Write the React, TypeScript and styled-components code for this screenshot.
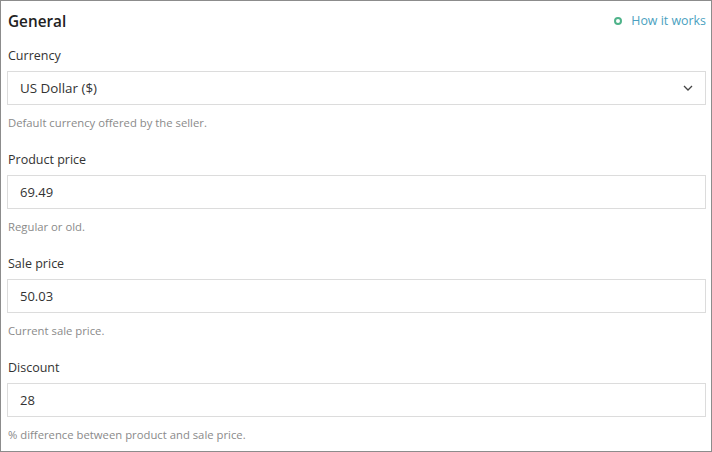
import React from "react";
import styled, { createGlobalStyle } from "styled-components";

const GlobalStyle = createGlobalStyle`
  body {
    margin: 0;
    background: #fff;
    font-family: "Open Sans", "Noto Sans", sans-serif;
  }
`;

type FieldProps = {
  label: string
  value: string
  hint: string
  select?: boolean
}

const fields: FieldProps[] = [
  {label: "Currency", value: "US Dollar ($)", hint: "Default currency offered by the seller.", select: true},
  {label: "Product price", value: "69.49", hint: "Regular or old."},
  {label: "Sale price", value: "50.03", hint: "Current sale price."},
  {label: "Discount", value: "28", hint: "% difference between product and sale price."},
];

const Field: React.FC<FieldProps> = props => (
  <FieldWrapper>
    <Label>{props.label}</Label>
    <InputBox $select={props.select}>
      <span>{props.value}</span>
      {props.select && (
        <svg width="10" height="6" viewBox="0 0 10 6">
          <polyline points="1,1 5,5 9,1" fill="none" stroke="#444" strokeWidth="1.3"/>
        </svg>
      )}
    </InputBox>
    <Hint>{props.hint}</Hint>
  </FieldWrapper>
);

const App: React.FC = () => (
  <>
    <GlobalStyle/>
    <Frame>
      <Header>
        <Title>General</Title>
        <HowLink>
          <Ring/>
          How it works
        </HowLink>
      </Header>
      {fields.map(f => <Field key={f.label} {...f}/>)}
    </Frame>
  </>
);

const Frame = styled.div`
  width: 712px;
  height: 452px;
  box-sizing: border-box;
  border: 1px solid #8c8c8c;
  padding: 0 5px 0 6px;
  overflow: hidden;
`;

const Header = styled.div`
  display: flex;
  justify-content: space-between;
  align-items: center;
  height: 39px;
  padding-left: 1px;
`;

const Title = styled.h1`
  margin: 0;
  font-size: 15.3px;
  font-weight: 600;
  color: #222;
`;

const HowLink = styled.a`
  display: flex;
  align-items: center;
  gap: 9px;
  font-size: 12.4px;
  color: #4a9fc0;
  cursor: pointer;
`;

const Ring = styled.span`
  width: 4px;
  height: 4px;
  border: 2px solid #4fb38a;
  border-radius: 50%;
`;

const FieldWrapper = styled.div`
  display: flex;
  flex-direction: column;
  height: 104px;
`;

const Label = styled.div`
  font-size: 12.5px;
  color: #333;
  height: 31px;
  line-height: 31px;
  padding-left: 1px;
`;

const InputBox = styled.div<{ $select?: boolean }>`
  height: 34px;
  box-sizing: border-box;
  border: 1px solid #dcdcdc;
  display: flex;
  align-items: center;
  justify-content: space-between;
  padding: 0 12px 0 12px;
  font-size: ${p => p.$select ? "13.4px" : "13px"};
  color: #333;
`;

const Hint = styled.div`
  font-size: 11.3px;
  color: #8a8a8a;
  height: 35px;
  line-height: 35px;
  padding-left: 1px;
`;

export default App;
